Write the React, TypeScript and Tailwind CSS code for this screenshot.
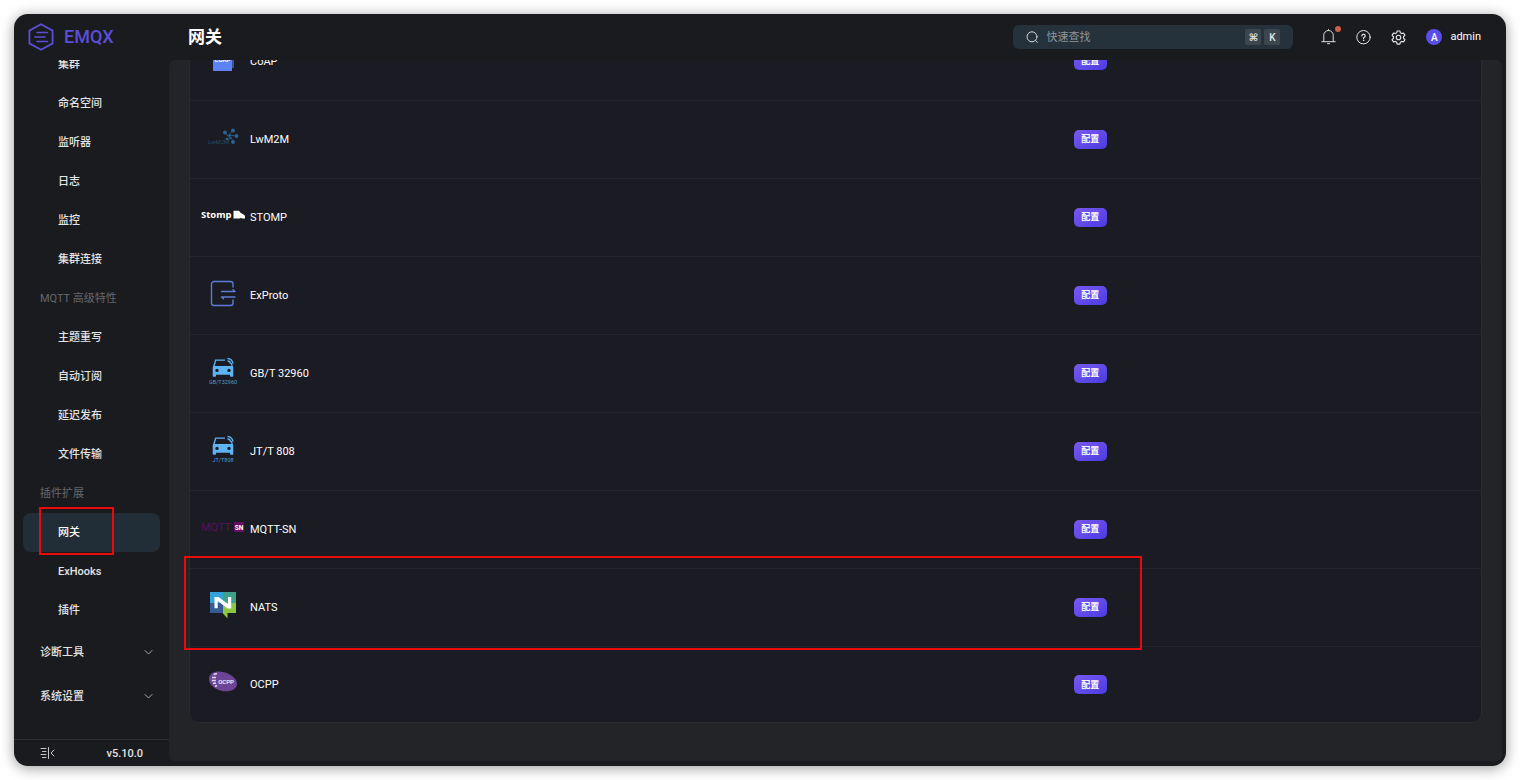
import React from 'react';
import clsx from 'clsx';

interface NavEntry {
  label: string;
  kind: 'item' | 'group' | 'section';
  active?: boolean;
}

interface Gateway {
  name: string;
  logo: React.ReactNode;
  marked?: boolean;
}

const navEntries: NavEntry[] = [
  { label: '集群', kind: 'item' },
  { label: '命名空间', kind: 'item' },
  { label: '监听器', kind: 'item' },
  { label: '日志', kind: 'item' },
  { label: '监控', kind: 'item' },
  { label: '集群连接', kind: 'item' },
  { label: 'MQTT 高级特性', kind: 'group' },
  { label: '主题重写', kind: 'item' },
  { label: '自动订阅', kind: 'item' },
  { label: '延迟发布', kind: 'item' },
  { label: '文件传输', kind: 'item' },
  { label: '插件扩展', kind: 'group' },
  { label: '网关', kind: 'item', active: true },
  { label: 'ExHooks', kind: 'item' },
  { label: '插件', kind: 'item' },
  { label: '诊断工具', kind: 'section' },
  { label: '系统设置', kind: 'section' },
];

const EmqxMark: React.FC = () => (
  <svg className="w-[26px] h-7" viewBox="0 0 26 28" fill="none" stroke="#5b4ed8" strokeLinejoin="round" strokeLinecap="round">
    <path strokeWidth="1.8" d="M13 1.2 24.6 7.6V20.4L13 26.8 1.4 20.4V7.6Z" />
    <path strokeWidth="1.6" d="M9 9.500H19.500M6.800 14H17M9 18.500H19.500" />
  </svg>
);

const CoapLogo: React.FC = () => (
  <svg className="w-7 h-7" viewBox="0 0 28 28">
    <rect x="7" y="4" width="18" height="19" fill="#33539b" />
    <rect x="4" y="6" width="19" height="20" fill="#5c82f6" />
    <text x="13.5" y="17" textAnchor="middle" fontSize="6" fontWeight="700" fill="#fff">COAP</text>
  </svg>
);

const Lwm2mLogo: React.FC = () => (
  <svg className="w-8 h-5" viewBox="0 0 32 20">
    <path d="M18 6l6 6M26 3l-4 5 7 1M24 10l2 5M20 13l4-3" stroke="#24597f" strokeWidth="1" fill="none" />
    <g fill="#2b6490">
      <circle cx="18" cy="5.5" r="1.9" />
      <circle cx="26" cy="3.5" r="1.9" />
      <circle cx="29.5" cy="9" r="1.9" />
      <circle cx="26" cy="15" r="1.9" />
      <circle cx="22.5" cy="8.5" r="1.3" />
      <circle cx="20" cy="12" r="1.3" />
    </g>
    <text x="1" y="16.5" fontSize="6" fill="#234a68">LwM2M</text>
  </svg>
);

const StompLogo: React.FC = () => (
  <svg className="w-11 h-4" viewBox="0 0 44 16">
    <text x="0" y="11" fontSize="9.5" fontWeight="700" fill="#fff" fontFamily="Open Sans">Stomp</text>
    <path d="M32.500 3.800h5.500l1.500 2 3 1.700 1.500 1.200v2.800H41l-1-.8-1 .8h-6.500Z" fill="#fff" />
  </svg>
);

const ExprotoLogo: React.FC = () => (
  <svg className="w-7 h-7" viewBox="0 0 28 28" fill="none" stroke="#5b7cd6" strokeWidth="1.4" strokeLinecap="round" strokeLinejoin="round">
    <path d="M24 8V5a2.500 2.500 0 0 0-2.500-2.500H5A2.500 2.500 0 0 0 2.500 5v19A2.500 2.500 0 0 0 5 26.500h16.500A2.500 2.500 0 0 0 24 24v-3" />
    <path d="M12.500 12.500H26l-2-1.700M26 18H12.500l2 1.700" />
  </svg>
);

const CarLogo: React.FC<{ label: string }> = ({ label }) => (
  <svg className="w-8 h-7" viewBox="0 0 32 28">
    <path
      fill="#5eb3f4"
      fillRule="evenodd"
      d="M8.200 2.500H18v1.300H9.200L7.700 9h16.800l-1-3h1.300l1.500 4.500V19a.8.8 0 0 1-.8.8h-1.700a.8.8 0 0 1-.8-.8v-1.300H9V19a.8.8 0 0 1-.8.8H6.500a.8.8 0 0 1-.8-.8v-8.500ZM10 11.700a1.700 1.700 0 1 0 0 3.400 1.700 1.700 0 0 0 0-3.400Zm12 0a1.700 1.700 0 1 0 0 3.400 1.700 1.700 0 0 0 0-3.400Z"
    />
    <path d="M20.500 1.500a5.500 5.500 0 0 1 5.500 5.300M20.500 4a3 3 0 0 1 3 2.800" fill="none" stroke="#5eb3f4" strokeWidth="1.300" />
    <text x="16" y="26.500" textAnchor="middle" fontSize="5.500" fill="#4f9bd6">{label}</text>
  </svg>
);

const MqttSnLogo: React.FC = () => (
  <svg className="w-11 h-4" viewBox="0 0 44 16">
    <text x="0" y="12" fontSize="11" fill="#5a0f5e">MQTT</text>
    <rect x="33" y="3" width="10" height="10" rx="1" fill="#660f68" />
    <text x="38" y="10.500" textAnchor="middle" fontSize="6.500" fontWeight="700" fill="#fff">SN</text>
  </svg>
);

const NatsLogo: React.FC = () => (
  <svg className="w-7 h-7" viewBox="0 0 28 28">
    <path fill="#34a3db" d="M1 1h13v11H1z" />
    <path fill="#41a08a" d="M14 1h13v11H14z" />
    <path fill="#375c93" d="M1 12h13v10H1z" />
    <path fill="#8dc63f" d="M14 12h13v10h-8.500v5.500L13.500 22h.5z" />
    <path fill="#fff" d="M5.500 6H9.500l9.500 7V6h3.200v11.500H18.600L8.700 10V17.200H5.500Z" />
  </svg>
);

const OcppLogo: React.FC = () => (
  <svg className="w-8 h-6" viewBox="0 0 32 24">
    <path fill="#6d4596" d="M2 8.500C2.500 3 8 .8 14 1.800c9 1 16.500 7 16 12.500-.5 5-6 7.500-12.500 7C8.500 20.500 1.500 14.500 2 8.500Z" />
    <path d="M6.500 4.500 10 3.500M5 7.500h4M4.800 10.500h4M6 13.500l3-.5M8 16.500l2-1" fill="none" stroke="#e4d9ef" strokeWidth="1.700" />
    <text x="19" y="14" textAnchor="middle" fontSize="6" fontWeight="500" fill="#fff">OCPP</text>
  </svg>
);

const gateways: Gateway[] = [
  { name: 'CoAP', logo: <CoapLogo /> },
  { name: 'LwM2M', logo: <Lwm2mLogo /> },
  { name: 'STOMP', logo: <StompLogo /> },
  { name: 'ExProto', logo: <ExprotoLogo /> },
  { name: 'GB/T 32960', logo: <CarLogo label="GB/T32960" /> },
  { name: 'JT/T 808', logo: <CarLogo label="JT/T808" /> },
  { name: 'MQTT-SN', logo: <MqttSnLogo /> },
  { name: 'NATS', logo: <NatsLogo />, marked: true },
  { name: 'OCPP', logo: <OcppLogo /> },
];

const NavRow: React.FC<{ entry: NavEntry }> = ({ entry }) => {
  if (entry.kind === 'group') {
    return <div className="h-[39px] shrink-0 pl-[26px] pt-0.5 flex items-center text-[#66676c]">{entry.label}</div>;
  }
  if (entry.kind === 'section') {
    return (
      <button className="h-11 shrink-0 pl-[26px] pr-4 flex items-center justify-between font-medium">
        <span className="pt-0.5">{entry.label}</span>
        <svg className="w-[9px] h-[9px]" viewBox="0 0 9 9" fill="none" stroke="#a9aaae" strokeLinecap="round" strokeLinejoin="round">
          <path d="M1 2.500 4.500 6 8 2.500" />
        </svg>
      </button>
    );
  }
  return (
    <a
      href="#"
      className={clsx(
        'relative h-[39px] shrink-0 mx-[9px] pl-[35px] pt-0.5 flex items-center rounded-lg font-medium',
        entry.active && 'bg-[#212e37] text-white',
      )}
    >
      {entry.label}
      {entry.active && <span className="absolute left-4 -top-[6px] w-[75px] h-12 border-2 border-[#ea0a0a]" />}
    </a>
  );
};

const Sidebar: React.FC = () => (
  <aside className="w-[155px] shrink-0 flex flex-col min-h-0">
    <nav className="flex-1 min-h-0 overflow-hidden flex flex-col justify-end pb-[21px]">
      {navEntries.map((entry) => (
        <NavRow key={entry.label} entry={entry} />
      ))}
    </nav>
    <div className="h-[27px] shrink-0 border-t border-[#2e2f33] px-[26px] flex items-center justify-between font-medium">
      <button aria-label="菜单">
        <svg className="w-[15px] h-3" viewBox="0 0 15 12" fill="none" stroke="#c6c7ca" strokeLinecap="round">
          <path d="M1 1.500h5M2.500 4.500H6M1 7.500h5M2.500 10.500H6M8.500 .5v11M14 3l-3 3 3 3" />
        </svg>
      </button>
      <span className="pt-0.5">v5.10.0</span>
    </div>
  </aside>
);

const Header: React.FC = () => (
  <header className="h-[46px] shrink-0 flex items-center pl-3.5 pr-[25px]">
    <div className="w-40 shrink-0 flex items-center gap-[10px]">
      <EmqxMark />
      <span className="text-lg font-medium text-[#5b4ed8]">EMQX</span>
    </div>
    <h1 className="pt-0.5 text-[17px] font-bold text-white">网关</h1>
    <label className="ml-auto w-[280px] h-6 rounded-md bg-[#25323b] px-[13px] flex items-center gap-2">
      <svg className="w-3 h-3 shrink-0" viewBox="0 0 12 12" fill="none" stroke="#d5d9dc" strokeLinecap="round">
        <circle cx="6" cy="5.800" r="5" />
        <path d="m9.700 9.600 1.600 1.700" />
      </svg>
      <input
        type="text"
        aria-label="快速查找"
        placeholder="快速查找"
        className="flex-1 min-w-0 pt-0.5 bg-transparent outline-none placeholder:text-[#8d959b]"
      />
      <span className="flex gap-[3px] text-[10px] text-[#e4e7e9]">
        <kbd className="w-4 h-4 rounded-xs bg-[#3b464f] flex items-center justify-center font-['Roboto','DejaVu_Sans',sans-serif] font-bold">⌘</kbd>
        <kbd className="w-4 h-4 rounded-xs bg-[#3b464f] flex items-center justify-center font-['Roboto',sans-serif] font-medium">K</kbd>
      </span>
    </label>
    <div className="ml-7 flex items-center gap-5">
      <button aria-label="通知" className="relative">
        <svg className="w-[15px] h-4" viewBox="0 0 15 16" fill="none" stroke="#dcdde0" strokeLinecap="round">
          <path d="M.8 12.700h13.400M2.800 12.500V6.200a4.700 4.700 0 0 1 9.400 0v6.300M7.500 1.500V.6M6.500 14.700h2" />
        </svg>
        <span className="absolute -top-[3px] -right-[5px] size-[6px] rounded-full bg-[#cc5f45]" />
      </button>
      <button aria-label="帮助">
        <svg className="w-[15px] h-[15px]" viewBox="0 0 15 15" fill="none" stroke="#e6e7e9" strokeLinecap="round">
          <circle cx="7.500" cy="7.200" r="6.700" />
          <path strokeWidth="1.200" d="M5.900 5.900a1.650 1.650 0 1 1 2.500 1.400c-.6.350-.9.600-.9 1.200" />
          <circle cx="7.500" cy="10.300" r=".3" />
        </svg>
      </button>
      <button aria-label="设置">
        <svg className="w-[15px] h-[15px]" viewBox="0 0 24 24" fill="none" stroke="#e6e7e9" strokeWidth="1.800" strokeLinejoin="round">
          <path d="M9.800 1.500h4.400l.8 3.100 2 1.150 3.100-.9 2.200 3.800-2.300 2.200v2.300l2.300 2.200-2.200 3.800-3.100-.9-2 1.150-.8 3.100H9.800L9 19.400l-2-1.150-3.100.9-2.200-3.800L4 13.150v-2.300L1.700 8.650l2.200-3.800 3.100.9L9 4.600Z" />
          <circle cx="12" cy="12" r="3.600" />
        </svg>
      </button>
      <button className="flex items-center gap-2 text-white">
        <span className="size-4 rounded-full bg-[#5a4eea] flex items-center justify-center text-[10px] font-medium">A</span>
        admin
      </button>
    </div>
  </header>
);

const GatewayRow: React.FC<{ gateway: Gateway }> = ({ gateway }) => (
  <tr className="h-[78px] last:h-[76px] border-b border-[#25262d] last:border-b-0">
    <td className="relative w-[68%] p-0">
      <div className="pl-[11px] pb-1 flex items-center gap-[5px] text-white">
        <span className="w-11 h-7 shrink-0 flex items-center justify-center">{gateway.logo}</span>
        <span className="pt-1.5">{gateway.name}</span>
      </div>
      {gateway.marked && (
        <span className="absolute -left-[6px] -right-[74px] -top-[13px] -bottom-[4px] border-2 border-[#ea0a0a]" />
      )}
    </td>
    <td className="p-0 pl-[6px]">
      <button className="w-[33px] h-[19px] pt-0.5 rounded-[5px] bg-linear-to-br from-[#7a58f2] to-[#4a3be0] flex items-center justify-center text-[9px] font-bold text-white">
        配置
      </button>
    </td>
  </tr>
);

export default function App() {
  return (
    <div className="h-screen p-3.5 bg-white">
      <div className="h-full flex flex-col overflow-hidden rounded-[14px] bg-[#1a1b1e] text-[#e3e4e6] text-[11px] font-['Roboto','Noto_Sans_CJK_SC',sans-serif] shadow-[0_2px_14px_rgba(0,0,0,0.4)]">
        <Header />
        <div className="flex-1 min-h-0 flex">
          <Sidebar />
          <main className="flex-1 min-w-0 mr-1 mb-[5px] px-5 pb-[38px] rounded-md bg-[#232428] overflow-hidden flex flex-col justify-end">
            <div className="shrink-0 rounded-[10px] border border-[#2a2b31] bg-[#1b1b23]">
              <table className="w-full border-collapse">
                <tbody>
                  {gateways.map((gateway) => (
                    <GatewayRow key={gateway.name} gateway={gateway} />
                  ))}
                </tbody>
              </table>
            </div>
          </main>
        </div>
      </div>
    </div>
  );
}
